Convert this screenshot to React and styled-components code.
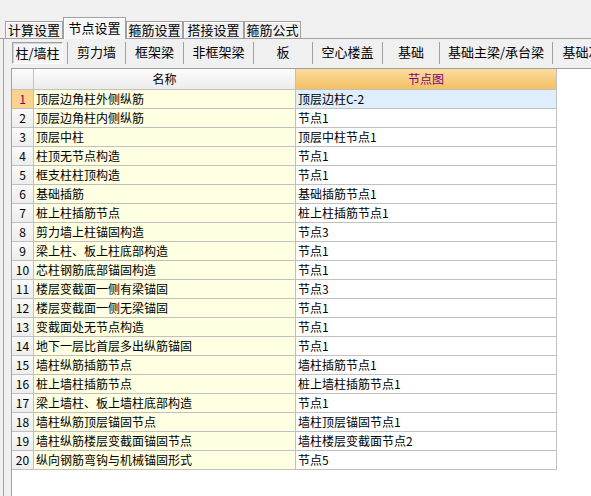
import React from "react";
import styled, { createGlobalStyle } from "styled-components";

const Global = createGlobalStyle`
  html, body { margin: 0; padding: 0; background: #f0f0f0; }
  * { box-sizing: border-box; }
`;

const Root = styled.div`
  width: 591px;
  height: 496px;
  background: #f0f0f0;
  overflow: hidden;
  display: flex;
  flex-direction: column;
  font-family: "Noto Sans CJK SC", "Noto Sans", sans-serif;
  color: #000;
`;

const TabStrip = styled.div`
  display: flex;
  align-items: flex-end;
  height: 39px;
  padding-left: 5px;
  border-bottom: 1px solid #a0a0a0;
  flex: none;
`;

const Tab = styled.div`
  position: relative;
  width: ${(p) => p.$w}px;
  height: ${(p) => (p.$active ? 22 : 17)}px;
  margin-bottom: ${(p) => (p.$active ? -1 : 0)}px;
  border: 1px solid #a0a0a0;
  border-bottom: none;
  background: ${(p) => (p.$active ? "#f7f7f7" : "#f0f0f0")};
  box-shadow: inset 1px 1px 0 #fff;
  font-size: 13px;
  line-height: ${(p) => (p.$active ? 19 : 15)}px;
  text-align: center;
  white-space: nowrap;
  z-index: ${(p) => (p.$active ? 1 : 0)};
`;

const Panel = styled.div`
  flex: 1;
  margin-left: 3px;
  border-left: 1px solid #a0a0a0;
  display: flex;
  flex-direction: column;
  min-height: 0;
`;

const SubTabBar = styled.div`
  display: flex;
  height: 22px;
  margin-top: 3px;
  margin-left: 8px;
  flex: none;
  overflow: hidden;
  white-space: nowrap;
`;

const SubTab = styled.div`
  flex: none;
  width: ${(p) => p.$w}px;
  height: 22px;
  font-size: 13px;
  line-height: 20px;
  text-align: center;
  border-left: ${(p) => (p.$first ? "none" : "1px solid #a0a0a0")};
  padding-left: ${(p) => (p.$first ? 0 : 0)}px;
`;

const Pressed = styled.div`
  width: 51px;
  height: 22px;
  border: 1px solid #a0a0a0;
  border-right-color: #fff;
  border-bottom-color: #fff;
  box-shadow: inset 1px 1px 0 #d4d4d4;
  background: #f5f5f5;
  font-size: 13px;
  line-height: 19px;
  text-align: center;
`;

const GridArea = styled.div`
  flex: 1;
  margin-top: 4px;
  margin-left: 7px;
  border-left: 1px solid #a0a0a0;
  border-top: 1px solid #a0a0a0;
  background: #fff;
  min-height: 0;
`;

const Table = styled.div`
  display: grid;
  grid-template-columns: 22px 262px 261px;
  grid-auto-rows: 19px;
  grid-template-rows: 21px;
  font-size: 12px;
  width: 545px;
`;

const Cell = styled.div`
  border-right: 1px solid #c0c0c0;
  border-bottom: 1px solid #c0c0c0;
  line-height: 18px;
  padding-left: 2px;
  white-space: nowrap;
  overflow: hidden;
  background: ${(p) => p.$bg || "#fff"};
`;

const HeadCell = styled.div`
  border-right: 1px solid #c0c0c0;
  border-bottom: 1px solid #c0c0c0;
  line-height: 19px;
  text-align: center;
  font-size: 12px;
  color: ${(p) => (p.$hot ? "#800080" : "#000")};
  background: ${(p) =>
    p.$hot
      ? "linear-gradient(#fbdc9f, #f4c062)"
      : "linear-gradient(#fcfcfc, #ececec)"};
`;

const NumCell = styled.div`
  border-right: 1px solid #c0c0c0;
  border-bottom: 1px solid #c0c0c0;
  line-height: 18px;
  text-align: center;
  font-size: 12px;
  color: ${(p) => (p.$sel ? "#800060" : "#000")};
  background: ${(p) =>
    p.$sel ? "#fbd38e" : "linear-gradient(#fafafa, #ededed)"};
`;

const tabs = [
  { t: "计算设置", w: 58 },
  { t: "节点设置", w: 63, active: true },
  { t: "箍筋设置", w: 57 },
  { t: "搭接设置", w: 61 },
  { t: "箍筋公式", w: 57 },
];

const subTabs = [
  { t: "剪力墙", w: 58 },
  { t: "框架梁", w: 58 },
  { t: "非框架梁", w: 70 },
  { t: "板", w: 59 },
  { t: "空心楼盖", w: 70 },
  { t: "基础", w: 57 },
  { t: "基础主梁/承台梁", w: 113 },
  { t: "基础次梁", w: 72 },
];

const rows = [
  ["顶层边角柱外侧纵筋", "顶层边柱C-2"],
  ["顶层边角柱内侧纵筋", "节点1"],
  ["顶层中柱", "顶层中柱节点1"],
  ["柱顶无节点构造", "节点1"],
  ["框支柱柱顶构造", "节点1"],
  ["基础插筋", "基础插筋节点1"],
  ["桩上柱插筋节点", "桩上柱插筋节点1"],
  ["剪力墙上柱锚固构造", "节点3"],
  ["梁上柱、板上柱底部构造", "节点1"],
  ["芯柱钢筋底部锚固构造", "节点1"],
  ["楼层变截面一侧有梁锚固", "节点3"],
  ["楼层变截面一侧无梁锚固", "节点1"],
  ["变截面处无节点构造", "节点1"],
  ["地下一层比首层多出纵筋锚固", "节点1"],
  ["墙柱纵筋插筋节点", "墙柱插筋节点1"],
  ["桩上墙柱插筋节点", "桩上墙柱插筋节点1"],
  ["梁上墙柱、板上墙柱底部构造", "节点1"],
  ["墙柱纵筋顶层锚固节点", "墙柱顶层锚固节点1"],
  ["墙柱纵筋楼层变截面锚固节点", "墙柱楼层变截面节点2"],
  ["纵向钢筋弯钩与机械锚固形式", "节点5"],
];

export default function App() {
  return (
    <Root>
      <Global />
      <TabStrip>
        {tabs.map((tb) => (
          <Tab key={tb.t} $w={tb.w} $active={tb.active}>
            {tb.t}
          </Tab>
        ))}
      </TabStrip>
      <Panel>
        <SubTabBar>
          <SubTab $first $w={55}>
            <Pressed>柱/墙柱</Pressed>
          </SubTab>
          {subTabs.map((s) => (
            <SubTab key={s.t} $w={s.w}>
              {s.t}
            </SubTab>
          ))}
        </SubTabBar>
        <GridArea>
          <Table>
            <HeadCell />
            <HeadCell>名称</HeadCell>
            <HeadCell $hot>节点图</HeadCell>
            {rows.map((r, i) => (
              <React.Fragment key={i}>
                <NumCell $sel={i === 0}>{i + 1}</NumCell>
                <Cell $bg="#ffffe1">{r[0]}</Cell>
                <Cell $bg={i === 0 ? "#dfeefd" : "#fff"}>{r[1]}</Cell>
              </React.Fragment>
            ))}
          </Table>
        </GridArea>
      </Panel>
    </Root>
  );
}
